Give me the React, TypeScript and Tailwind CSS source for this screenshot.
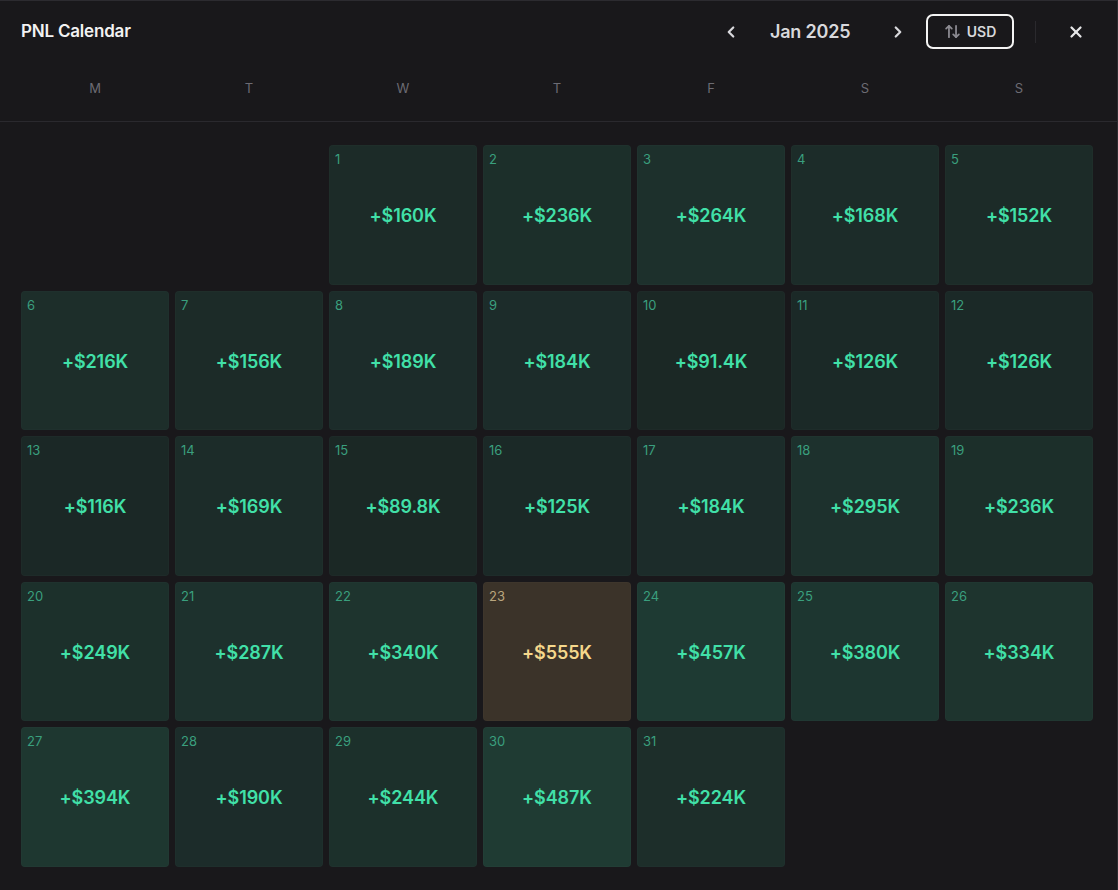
import { ChevronLeft, ChevronRight, X, ArrowUpDown } from "lucide-react";

// Daily PNL values in thousands, Jan 2025 (starts on Wednesday)
const pnl: number[] = [
  160, 236, 264, 168, 152,
  216, 156, 189, 184, 91.4, 126, 126,
  116, 169, 89.8, 125, 184, 295, 236,
  249, 287, 340, 555, 457, 380, 334,
  394, 190, 244, 487, 224,
];

const weekDays = ["M", "T", "W", "T", "F", "S", "S"];
const offset = 2;

function DayCell({ day, value, best }: { day: number; value: number; best: boolean }) {
  const alpha = 0.06 + 0.13 * Math.min(value / 490, 1);
  const bg = best ? "#3b3329" : `rgba(58, 214, 160, ${alpha.toFixed(3)})`;
  return (
    <div
      className="relative rounded-[4px] flex items-center justify-center border border-white/[0.015]"
      style={{ backgroundColor: bg }}
    >
      <span
        className={`absolute left-[5px] top-[4px] text-[13px] ${best ? "text-[#b9a57e]" : "text-[#3a9f7e]"}`}
      >
        {day}
      </span>
      <span
        className={`mt-[2px] text-[18px] font-semibold tracking-[-0.1px] ${best ? "text-[#f5d88c]" : "text-[#41e0a8]"}`}
      >
        +${value}K
      </span>
    </div>
  );
}

export default function App() {
  const cells: (number | null)[] = [...Array(offset).fill(null), ...pnl.map((_, i) => i + 1)];
  const maxVal = Math.max(...pnl);

  return (
    <div className="w-[1118px] h-[890px] bg-[#19181b] border-t border-r border-[#2c2b30] font-['Inter',sans-serif] text-white overflow-hidden flex flex-col">
      {/* Header */}
      <div className="h-[61px] flex items-center pl-[21px] pr-[31px]">
        <h1 className="text-[17px] font-semibold text-[#f2f2f2] tracking-[-0.2px]">PNL Calendar</h1>
        <div className="ml-auto flex items-center">
          <button className="w-[24px] h-[24px] flex items-center justify-center text-[#d8d8dc]">
            <ChevronLeft size={18} strokeWidth={3} />
          </button>
          <span className="ml-[27px] w-[88px] text-[18px] font-semibold text-[#d8d8dc] tracking-[-0.2px] whitespace-nowrap">Jan 2025</span>
          <button className="ml-[28px] w-[24px] h-[24px] flex items-center justify-center text-[#d8d8dc]">
            <ChevronRight size={18} strokeWidth={3} />
          </button>
          <button className="ml-[16px] w-[88px] h-[35px] rounded-[7px] border-2 border-[#f4f4f4] flex items-center justify-center gap-[6px]">
            <ArrowUpDown size={17} strokeWidth={2.5} className="text-[#8c8b92]" />
            <span className="text-[14px] font-semibold text-[#d8d8dc]">USD</span>
          </button>
          <div className="ml-[21px] w-px h-[22px] bg-[#2a292d]" />
          <button className="ml-[30px] w-[20px] h-[20px] flex items-center justify-center text-[#e6e6e8]">
            <X size={18} strokeWidth={3} />
          </button>
        </div>
      </div>

      {/* Weekday labels */}
      <div className="grid grid-cols-7 gap-[6px] pl-[21px] pr-[24px] h-[60px] items-center border-b border-[#2a292e]">
        {weekDays.map((d, i) => (
          <div key={i} className="text-center text-[13px] text-[#6c6b73] -mt-[6px]">
            {d}
          </div>
        ))}
      </div>

      {/* Calendar grid */}
      <div className="grid grid-cols-7 auto-rows-[139.5px] gap-[6px] pl-[21px] pr-[24px] pt-[23px]">
        {cells.map((day, i) =>
          day === null ? (
            <div key={i} />
          ) : (
            <DayCell key={i} day={day} value={pnl[day - 1]} best={pnl[day - 1] === maxVal} />
          )
        )}
      </div>
    </div>
  );
}
